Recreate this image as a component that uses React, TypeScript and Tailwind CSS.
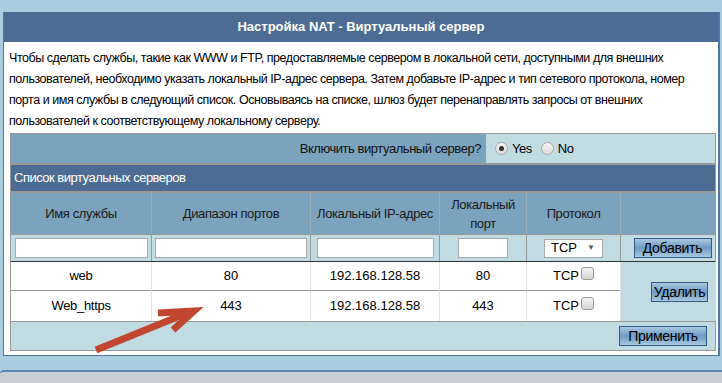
const COLS = 'grid grid-cols-[140px_159px_129px_87px_94px_96px]';

const Radio = ({ checked }: { checked?: boolean }) => (
  <span className="inline-flex items-center justify-center w-[13px] h-[13px] rounded-full border border-[#a7a7a7] bg-gradient-to-b from-[#f4f4f4] to-[#dcdcdc]">
    {checked && <span className="w-[5px] h-[5px] rounded-full bg-[#333]" />}
  </span>
);

const Check = () => (
  <span className="inline-block w-[13px] h-[13px] rounded-[3px] border border-[#9a9a9a] bg-gradient-to-b from-[#f2f2f2] to-[#d6d6d6] -translate-y-[3px]" />
);

const Btn = ({ children, w }: { children: React.ReactNode; w: string }) => (
  <button className={`${w} h-[20px] border border-[#355a86] bg-gradient-to-b from-[#a9c8e0] via-[#6e9ac3] to-[#a9c8e0] text-[14px] leading-none text-black tracking-[-0.3px]`}>
    {children}
  </button>
);

const Field = ({ w }: { w: string }) => (
  <input className={`${w} h-[20px] bg-white border border-[#a9a9a9] outline-none`} />
);

export default function App() {
  const rows = [
    { name: 'web', ports: '80', ip: '192.168.128.58', port: '80' },
    { name: 'Web_https', ports: '443', ip: '192.168.128.58', port: '443' },
  ];

  return (
    <div className="relative w-[722px] h-[383px] overflow-hidden bg-[#a9cedf] font-['Liberation_Sans',Arial,sans-serif] text-[13px] text-black">
      <div className="pt-[12px] pl-[3px]">
        <div className="w-[717px] bg-white border-l border-l-[#5a7396] border-r-2 border-r-[#4f78a8] border-b border-b-[#5a7396]">
          <div className="h-[30px] bg-[#4d6c94] text-white font-bold text-[13px] flex items-center justify-center">
            Настройка NAT - Виртуальный сервер
          </div>

          <p className="pt-[6px] pl-[5px] text-[12.5px] tracking-[-0.45px] leading-[21px] whitespace-nowrap">
            Чтобы сделать службы, такие как WWW и FTP, предоставляемые сервером в локальной сети, доступными для внешних<br />
            пользователей, необходимо указать локальный IP-адрес сервера. Затем добавьте IP-адрес и тип сетевого протокола, номер<br />
            порта и имя службы в следующий список. Основываясь на списке, шлюз будет перенаправлять запросы от внешних<br />
            пользователей к соответствующему локальному серверу.
          </p>

          <div className="ml-[6px] mt-[1px] mb-[4px] w-[706px] border border-[#999]">
            {/* enable */}
            <div className="flex h-[31px] border-b-2 border-[#999] tracking-[-0.45px]">
              <div className="w-[475px] bg-[#7ba3bd] flex items-center justify-end pr-[5px] text-[#111]">
                Включить виртуальный сервер?
              </div>
              <div className="flex-1 bg-[#c1dbe3] flex items-center gap-[4px] pl-[9px]">
                <Radio checked /> <span>Yes</span>
                <span className="w-[1px]" />
                <Radio /> <span>No</span>
              </div>
            </div>

            {/* section */}
            <div className="h-[28px] bg-[#4d6c94] text-white flex items-center pl-[3px] border-b-2 border-[#999] tracking-[-0.5px]">
              Список виртуальных серверов
            </div>

            {/* column titles */}
            <div className={`${COLS} h-[42px] bg-[#7ba3bd] text-[#1a1a1a] text-center leading-[19px] border-b border-[#999] tracking-[-0.4px]`}>
              <div className="flex items-center justify-center">Имя службы</div>
              <div className="flex items-center justify-center border-l border-[#9aaebb]">Диапазон портов</div>
              <div className="flex items-center justify-center border-l border-[#9aaebb]">Локальный IP-адрес</div>
              <div className="flex items-center justify-center border-l border-[#9aaebb]">Локальный<br />порт</div>
              <div className="flex items-center justify-center border-l border-[#9aaebb]">Протокол</div>
              <div className="border-l border-[#9aaebb]" />
            </div>

            {/* input row */}
            <div className={`${COLS} h-[27px] bg-[#c1dbe3] border-b border-[#333]`}>
              <div className="flex items-center justify-center"><Field w="w-[133px]" /></div>
              <div className="flex items-center justify-center border-l border-[#999]"><Field w="w-[152px]" /></div>
              <div className="flex items-center justify-center border-l border-[#999]"><Field w="w-[117px]" /></div>
              <div className="flex items-center justify-center border-l border-[#999]"><Field w="w-[50px]" /></div>
              <div className="flex items-center justify-center border-l border-[#999]">
                <div className="w-[59px] h-[19px] bg-white border border-[#a9a9a9] flex items-center justify-between pl-[6px] pr-[7px] text-[13px]">
                  TCP <span className="text-[8px] text-[#555]">▼</span>
                </div>
              </div>
              <div className="flex items-center justify-center border-l border-[#999] pl-[8px]">
                <Btn w="w-[78px]">Добавить</Btn>
              </div>
            </div>

            {/* data rows */}
            <div className={`${COLS} grid-rows-[29px_30px] border-b border-[#999]`}>
              {rows.map((r, i) => (
                <div key={r.name} className="contents">
                  <div className={`bg-white flex items-center justify-center tracking-[-0.3px] ${i === 0 ? 'border-b border-[#999]' : ''}`}>{r.name}</div>
                  <div className={`bg-white flex items-center justify-center border-l border-[#e2e2e2] ${i === 0 ? 'border-b border-b-[#999]' : ''}`}>{r.ports}</div>
                  <div className={`bg-white flex items-center justify-center border-l border-[#e2e2e2] ${i === 0 ? 'border-b border-b-[#999]' : ''}`}>{r.ip}</div>
                  <div className={`bg-white flex items-center justify-center border-l border-[#e2e2e2] ${i === 0 ? 'border-b border-b-[#999]' : ''}`}>{r.port}</div>
                  <div className={`bg-white flex items-center justify-center gap-[2px] border-l border-[#e2e2e2] ${i === 0 ? 'border-b border-b-[#999]' : ''}`}>
                    <span>TCP</span><Check />
                  </div>
                  {i === 0 && (
                    <div className="row-span-2 bg-[#c1dbe3] border-l border-[#e2e2e2] flex items-center justify-end pr-[8px]">
                      <Btn w="w-[57px]">Удалить</Btn>
                    </div>
                  )}
                </div>
              ))}
            </div>

            {/* apply */}
            <div className="h-[28px] bg-[#c1dbe3] flex items-center justify-end pr-[8px]">
              <Btn w="w-[88px]">Применить</Btn>
            </div>
          </div>
        </div>
      </div>

      <div className="mt-[14px] h-[20px] rounded-tl-[4px] border-t-2 border-[#5a84b4] bg-[#c9cfd3]" />

      <svg className="absolute left-0 top-0 pointer-events-none" width="722" height="383">
        <g stroke="#c0462f" strokeWidth="7" fill="none" strokeLinejoin="miter">
          <line x1="96" y1="350" x2="192" y2="311" />
          <polyline points="158,313 194,311 173,330" />
        </g>
      </svg>
    </div>
  );
}
